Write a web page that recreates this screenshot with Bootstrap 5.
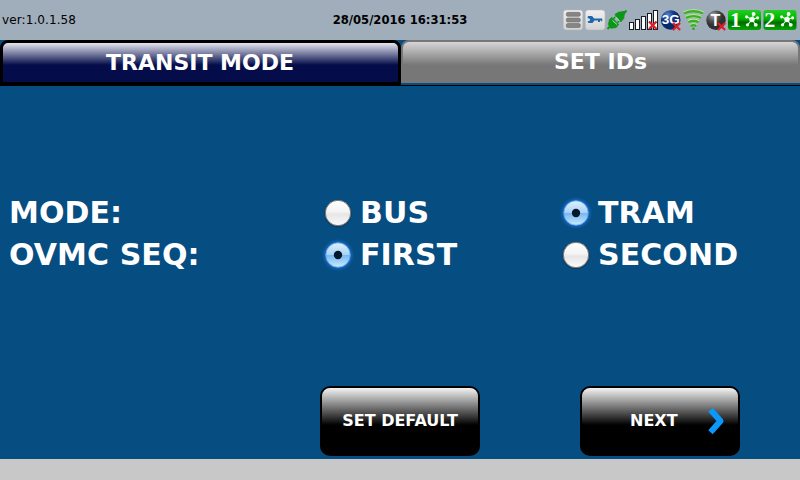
<!DOCTYPE html>
<html lang="en">
<head>
<meta charset="utf-8">
<meta name="viewport" content="width=device-width, initial-scale=1">
<title>Transit mode</title>
<link href="https://cdn.jsdelivr.net/npm/bootstrap@5.3.0/dist/css/bootstrap.min.css" rel="stylesheet">
<style>
body{font-family:"DejaVu Sans",sans-serif;background:#064d81;color:#fff}
.screen{width:800px;height:480px}
.status-bar{height:40px;background:#a0adba;color:#000;font-size:12px;line-height:16px;padding:0 2px}
.status-bar>*{flex:1 1 0}
.version{letter-spacing:.1px}
.clock{font-size:11.6px;white-space:nowrap}
.status-icons svg{display:block;flex:none}
.tabs{height:46px;border-bottom:1px solid #000}
.tab-btn{border-radius:8px 8px 0 0;color:#fff;font-size:22px;font-weight:700;line-height:26px;padding:0}
.tab-on{width:401px;height:46px;border:3px solid #000;border-bottom-width:4px;background:linear-gradient(#e6e6f0 0,#040d4a 22px);padding-right:1px}
.tab-off{width:399px;height:43px;border:2px solid #777;background:linear-gradient(#d6d6d6 0,#777 23px)}
.options{font-size:30px;font-weight:700;line-height:42px;letter-spacing:.08px;padding:106px 0 0 9px}
.options .row{height:42px}
.c-label{width:311px}.c-one{width:238px}.c-two{width:240px}
.c-one svg,.c-two svg{display:block;width:36px;height:36px;flex:none}
.choice{gap:4px}
.actions{padding:0 60px 3px 320px}
.act{width:160px;height:70px;border:2px solid #000;border-radius:10px;background:linear-gradient(#f4f4f4 0,#000 37px);color:#fff;font-size:16px;font-weight:700;padding:0 0 1px}
.act-next{padding:0 12px 1px 48px}
.foot{height:21px;background:#c8c8c8}
</style>
<script src="https://cdn.jsdelivr.net/npm/bootstrap@5.3.0/dist/js/bootstrap.bundle.min.js"></script>
</head>
<body>
<svg width="0" height="0" class="position-absolute" aria-hidden="true">
<defs>
<linearGradient id="gWhite" x2="0" y2="1"><stop stop-color="#fff"/><stop offset=".45" stop-color="#f4f4f4"/><stop offset=".55" stop-color="#e6e6e6"/><stop offset="1" stop-color="#fafafa"/></linearGradient>
<linearGradient id="gSel" x2="0" y2="1"><stop stop-color="#e0f0fd"/><stop offset=".48" stop-color="#a8d3f8"/><stop offset=".52" stop-color="#78b7f1"/><stop offset="1" stop-color="#c8ecff"/></linearGradient>
<radialGradient id="gGlow"><stop offset=".7" stop-color="#2478d8"/><stop offset=".8" stop-color="#1464b8" stop-opacity=".7"/><stop offset=".95" stop-color="#1464b8" stop-opacity="0"/></radialGradient>
<linearGradient id="gGreen" x2="0" y2="1"><stop stop-color="#22ce22"/><stop offset=".45" stop-color="#00b400"/><stop offset=".62" stop-color="#006c00"/><stop offset="1" stop-color="#00a800"/></linearGradient>
<linearGradient id="gTile" x2="0" y2="1"><stop stop-color="#f0f0f0"/><stop offset="1" stop-color="#d2d2d2"/></linearGradient>
<radialGradient id="gBlue" cx=".35" cy=".25"><stop stop-color="#5e86cc"/><stop offset=".6" stop-color="#123c8c"/><stop offset="1" stop-color="#06286c"/></radialGradient>
<radialGradient id="gGray" cx=".35" cy=".25"><stop stop-color="#aaa"/><stop offset=".6" stop-color="#505050"/><stop offset="1" stop-color="#303030"/></radialGradient>
<symbol id="radio-off" viewBox="0 0 36 36"><circle cx="18" cy="18.700" r="13.600" fill="#002b50" opacity=".5"/><circle cx="18" cy="18" r="12.700" fill="url(#gWhite)" stroke="#77716d"/></symbol>
<symbol id="radio-on" viewBox="0 0 36 36"><circle cx="18" cy="18" r="17" fill="url(#gGlow)"/><circle cx="18" cy="18" r="12.200" fill="url(#gSel)" stroke="#5fa5ea" stroke-width=".8"/><circle cx="18" cy="18" r="4.200" fill="#04182b"/></symbol>
<symbol id="cross" viewBox="0 0 10 10"><path d="M1 1 9 9M9 1 1 9" fill="none" stroke="#df1d25" stroke-width="2.400"/></symbol>
<symbol id="nodes" viewBox="0 0 14 14"><path d="M7 7 2 4.500M7 7 8.500 1.800M7 7 12.300 5.400M7 7 2.800 12M7 7 10.500 12" stroke="#e8ffe8" stroke-width="1"/><g fill="#f2fff2"><circle cx="7" cy="7" r="2.500"/><circle cx="2" cy="4.500" r="1.500"/><circle cx="8.500" cy="1.900" r="1.800"/><circle cx="12.200" cy="5.400" r="1.500"/><circle cx="2.800" cy="12" r="1.500"/><circle cx="10.500" cy="12" r="1.800"/></g></symbol>
</defs>
</svg>
<main class="screen d-flex flex-column overflow-hidden">
<header class="status-bar d-flex align-items-center">
<div class="version">ver:1.0.1.58</div>
<div class="clock fw-bold text-center">28/05/2016 16:31:53</div>
<div class="status-icons d-flex justify-content-end">
<svg width="238" height="32" viewBox="560 4 238 32">
<!-- storage -->
<rect x="563.300" y="10" width="19.500" height="20" rx="3" fill="url(#gTile)" stroke="#b5b8ba" stroke-width=".6"/>
<g fill="#858585" stroke="#6c6c6c" stroke-width=".6"><rect x="566.300" y="12.300" width="14" height="4" rx="1.500"/><rect x="566.300" y="18" width="14" height="4" rx="1.500"/><rect x="566.300" y="23.500" width="14" height="4" rx="1.500"/></g>
<!-- key -->
<rect x="585.300" y="10" width="19.700" height="20" rx="3" fill="url(#gTile)" stroke="#b5b8ba" stroke-width=".6"/>
<path d="M588 16h4l2.200 2.500h8v2.800h-1.200v-.8h-1v1.500h-2v-1.500h-3.500l-2 2.500h-4l-1-1.500 2.500-1v-1.500l-2.500-1z" fill="#1e67ac"/>
<!-- connector plug -->
<g fill="none" stroke="#0d9718"><path d="M607.500 29 611 25.500M623 14.500 626.500 10.500" stroke-width="2"/><path d="m609.500 19.500 2.500-2 6.500 6.800-2.300 3.200-5.200.7-2.500-3.500z" fill="#0d9718"/><path d="m615 14.500 3.500-2.200 6-.8-.8 7-2.800 3.200z" fill="#0d9718"/><path d="m613.500 18.500 3-2.500M617.500 22.500l3-2.500" stroke-width="1.600"/></g>
<path d="m612.500 20.500 4.500 4M615.300 16.800l4.500 4.400" stroke="#b8dcc0" stroke-width="1"/>
<!-- signal strength -->
<g fill="#fff" stroke="#161c22" stroke-width="1"><rect x="629.500" y="22.500" width="4" height="7"/><rect x="635.500" y="19.500" width="4" height="10"/><rect x="641.500" y="16.500" width="4" height="13"/><rect x="647.500" y="13.500" width="4" height="16"/><rect x="653.500" y="10.500" width="4" height="19"/></g>
<use href="#cross" x="648" y="20.500" width="9.500" height="9.500"/>
<!-- mobile network -->
<circle cx="670.700" cy="20" r="9.800" fill="url(#gBlue)"/>
<text x="661.700" y="24.300" font-family="Liberation Sans" font-size="13" font-weight="700" fill="#fff" textLength="18" lengthAdjust="spacingAndGlyphs">3G</text>
<use href="#cross" x="672" y="22" width="9" height="9"/>
<!-- wireless -->
<g fill="none" stroke="#b9eca4" stroke-width="3.700"><path d="M684 13.200q9.500-4.400 19 0M686 17.600q7.500-3.500 15 0M688.500 21.900q5-2.500 10 0M690.500 25.700q3-1.400 6 0"/></g>
<g fill="none" stroke="#3fae26" stroke-width="2.400"><path d="M684 13.500q9.500-4.400 19 0M686 17.900q7.500-3.500 15 0M688.500 22.200q5-2.500 10 0M690.500 26q3-1.400 6 0"/></g><circle cx="693.500" cy="28.700" r="1.300" fill="#25a91a"/>
<!-- terminal -->
<circle cx="716" cy="20.300" r="9.700" fill="url(#gGray)"/>
<text x="715.500" y="26" text-anchor="middle" font-family="Liberation Sans" font-size="16" font-weight="700" fill="#fff">T</text>
<use href="#cross" x="717" y="22" width="9" height="9"/>
<!-- numbered units -->
<rect x="728" y="10" width="33" height="20" rx="3" fill="url(#gGreen)"/><rect x="763.500" y="10" width="33" height="20" rx="3" fill="url(#gGreen)"/>
<g font-family="Liberation Serif" font-size="22" font-weight="700" fill="#fff" text-anchor="middle"><text x="735.500" y="27.300">1</text><text x="769.700" y="27.300">2</text></g>
<use href="#nodes" x="744.500" y="11.500" width="15" height="16"/><use href="#nodes" x="779.500" y="11.500" width="15" height="16"/>
</svg>
</div>
</header>
<nav class="tabs d-flex flex-shrink-0">
<button type="button" class="tab-btn tab-on flex-shrink-0">TRANSIT MODE</button>
<button type="button" class="tab-btn tab-off flex-shrink-0">SET IDs</button>
</nav>
<section class="options flex-grow-1">
<div class="row g-0 flex-nowrap">
<div class="c-label">MODE:</div>
<div class="c-one choice d-flex align-items-center"><svg><use href="#radio-off"/></svg><span>BUS</span></div>
<div class="c-two choice d-flex align-items-center"><svg><use href="#radio-on"/></svg><span>TRAM</span></div>
</div>
<div class="row g-0 flex-nowrap">
<div class="c-label">OVMC SEQ:</div>
<div class="c-one choice d-flex align-items-center"><svg><use href="#radio-on"/></svg><span>FIRST</span></div>
<div class="c-two choice d-flex align-items-center"><svg><use href="#radio-off"/></svg><span>SECOND</span></div>
</div>
</section>
<div class="actions d-flex justify-content-between">
<button type="button" class="act">SET DEFAULT</button>
<button type="button" class="act act-next d-flex align-items-center justify-content-between">NEXT
<svg width="18" height="28" viewBox="0 0 18 28"><path d="M4.500 5 12.500 14 4.500 23" fill="none" stroke="#0b98fb" stroke-width="6" stroke-linejoin="round" stroke-linecap="square"/></svg>
</button>
</div>
<footer class="foot flex-shrink-0"></footer>
</main>
</body>
</html>
